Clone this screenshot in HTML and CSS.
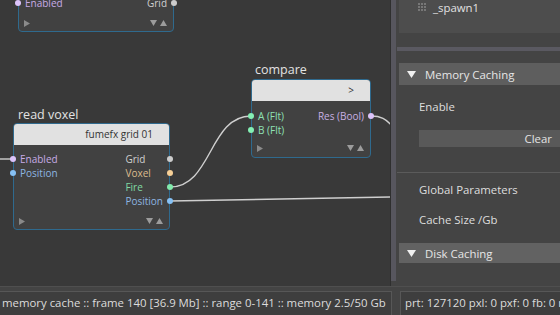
FILE: index.html
```html
<!DOCTYPE html>
<html>
<head>
<meta charset="utf-8">
<link rel="stylesheet" href="styles.css">
</head>
<body>
<div class="app">
  <div class="main">
    <div class="graph">
      <svg class="wires" width="390" height="287" viewBox="0 0 390 287">
        <path d="M0,159 L13,159" />
        <path d="M170,187 C212,187 209,116 251,116" />
        <path d="M170,201 C260,200 330,198 392,197" />
        <path d="M371,116 C381,116 386,119 392,126" />
      </svg>

      <div class="node node-top">
        <div class="box">
          <div class="ports">
            <div class="col in">
              <div class="port enabled"><span class="dot"></span>Enabled</div>
            </div>
            <div class="col out">
              <div class="port grid"><span class="dot"></span>Grid</div>
            </div>
          </div>
          <div class="foot">
            <svg class="play" width="6" height="7" viewBox="0 0 6 7"><polygon points="0,0 6,3.5 0,7"/></svg>
            <span class="arrows">
              <svg width="7" height="6" viewBox="0 0 7 6"><polygon points="0,0 7,0 3.5,6"/></svg>
              <svg width="7" height="6" viewBox="0 0 7 6"><polygon points="3.5,0 7,6 0,6"/></svg>
            </span>
          </div>
        </div>
      </div>

      <div class="node node-read">
        <div class="title">read voxel</div>
        <div class="box">
          <div class="head">fumefx grid 01</div>
          <div class="ports">
            <div class="col in">
              <div class="port enabled"><span class="dot"></span>Enabled</div>
              <div class="port position"><span class="dot"></span>Position</div>
            </div>
            <div class="col out">
              <div class="port grid"><span class="dot"></span>Grid</div>
              <div class="port voxel"><span class="dot"></span>Voxel</div>
              <div class="port fire"><span class="dot"></span>Fire</div>
              <div class="port position"><span class="dot"></span>Position</div>
            </div>
          </div>
          <div class="foot">
            <svg class="play" width="6" height="7" viewBox="0 0 6 7"><polygon points="0,0 6,3.5 0,7"/></svg>
            <span class="arrows">
              <svg width="7" height="6" viewBox="0 0 7 6"><polygon points="0,0 7,0 3.5,6"/></svg>
              <svg width="7" height="6" viewBox="0 0 7 6"><polygon points="3.5,0 7,6 0,6"/></svg>
            </span>
          </div>
        </div>
      </div>

      <div class="node node-compare">
        <div class="title">compare</div>
        <div class="box">
          <div class="head">&gt;</div>
          <div class="ports">
            <div class="col in">
              <div class="port flt"><span class="dot"></span>A (Flt)</div>
              <div class="port flt"><span class="dot"></span>B (Flt)</div>
            </div>
            <div class="col out">
              <div class="port res"><span class="dot"></span>Res (Bool)</div>
            </div>
          </div>
          <div class="foot">
            <svg class="play" width="6" height="7" viewBox="0 0 6 7"><polygon points="0,0 6,3.5 0,7"/></svg>
            <span class="arrows">
              <svg width="7" height="6" viewBox="0 0 7 6"><polygon points="0,0 7,0 3.5,6"/></svg>
              <svg width="7" height="6" viewBox="0 0 7 6"><polygon points="3.5,0 7,6 0,6"/></svg>
            </span>
          </div>
        </div>
      </div>
    </div>
    <div class="splitter"></div>
    <div class="panel">
      <div class="tree">
        <div class="tree-item">
          <svg class="grip" width="8" height="8" viewBox="0 0 8 8">
            <rect x="0" y="0" width="2" height="2"/><rect x="3" y="0" width="2" height="2"/><rect x="6" y="0" width="2" height="2"/>
            <rect x="0" y="3" width="2" height="2"/><rect x="3" y="3" width="2" height="2"/><rect x="6" y="3" width="2" height="2"/>
            <rect x="0" y="6" width="2" height="2"/><rect x="3" y="6" width="2" height="2"/><rect x="6" y="6" width="2" height="2"/>
          </svg>
          <span>_spawn1</span>
        </div>
      </div>
      <div class="hbar"></div>
      <div class="section-head">
        <svg width="9" height="7" viewBox="0 0 9 7"><polygon points="0,0 9,0 4.5,7"/></svg>
        <span>Memory Caching</span>
      </div>
      <div class="prop first">Enable</div>
      <div class="button">Clear</div>
      <div class="sep"></div>
      <div class="prop">Global Parameters</div>
      <div class="prop">Cache Size /Gb</div>
      <div class="section-head disk">
        <svg width="9" height="7" viewBox="0 0 9 7"><polygon points="0,0 9,0 4.5,7"/></svg>
        <span>Disk Caching</span>
      </div>
    </div>
  </div>
  <div class="status">
    <div class="sbox sleft">memory cache :: frame 140 [36.9 Mb] :: range 0-141 :: memory 2.5/50 Gb</div>
    <div class="sbox sright">prt: 127120 pxl: 0 pxf: 0 fb: 0 mem: 0</div>
  </div>
</div>
</body>
</html>
```

FILE: styles.css
```css
html, body {
  margin: 0;
  padding: 0;
}
body {
  width: 560px;
  height: 315px;
  overflow: hidden;
  background: #444444;
  font-family: "Open Sans", "Noto Sans", sans-serif;
  color: #dcdcdc;
}
.app {
  display: flex;
  flex-direction: column;
  height: 315px;
}
.main {
  display: flex;
  height: 287px;
}
.graph {
  position: relative;
  width: 390px;
  height: 286px;
  background: #393939;
  border-right: 1px solid #2f2f2f;
  overflow: hidden;
  flex: none;
}
.wires {
  position: absolute;
  left: 0;
  top: 0;
}
.wires path {
  fill: none;
  stroke: #cfcfcf;
  stroke-width: 1.4;
}
.splitter {
  width: 5px;
  height: 281px;
  background: #57565e;
  flex: none;
}
.node {
  position: absolute;
}
.node-top {
  left: 18px;
  top: -12px;
  width: 156px;
}
.node-read {
  left: 13px;
  top: 107px;
  width: 157px;
}
.node-compare {
  left: 251px;
  top: 62px;
  width: 120px;
}
.title {
  font-size: 12.5px;
  line-height: 16px;
  color: #e2e2e2;
  padding-left: 5px;
  margin-bottom: 0;
}
.node-compare .title {
  padding-left: 4px;
  margin-bottom: 1px;
}
.box {
  background: #414141;
  border: 1px solid #2f6a8e;
  border-radius: 4px;
}
.head {
  background: #e1e1e1;
  color: #333;
  font-size: 10px;
  height: 21px;
  line-height: 21px;
  text-align: right;
  padding-right: 16px;
  border-radius: 3px 3px 0 0;
}
.ports {
  display: flex;
  justify-content: space-between;
  padding-top: 7px;
}
.node-compare .ports {
  padding-top: 8px;
}
.col {
  display: flex;
  flex-direction: column;
  align-items: stretch;
}
.port {
  position: relative;
  font-size: 10px;
  line-height: 14px;
  height: 14px;
  white-space: nowrap;
}
.in .port {
  padding-left: 6px;
}
.out .port {
  padding-right: 6px;
}
.dot {
  position: absolute;
  top: 4px;
  width: 6px;
  height: 6px;
  border-radius: 50%;
}
.in .dot {
  left: -4px;
}
.out .dot {
  right: -4px;
}
.enabled { color: #c7abe6; }
.enabled .dot { background: #dcc3fa; }
.position { color: #8db6e2; }
.position .dot { background: #86c1f4; }
.grid { color: #d0d0d0; }
.grid .dot { background: #cccccc; }
.voxel { color: #dcbd8e; }
.voxel .dot { background: #f6cf96; }
.fire { color: #80d9a3; }
.fire .dot { background: #82eaac; }
.flt { color: #8ee0b4; }
.flt .dot { background: #84f0b4; }
.res { color: #c8b0e2; }
.res .dot { background: #dcc3fa; }
.foot {
  display: flex;
  justify-content: space-between;
  align-items: flex-end;
  height: 21px;
  box-sizing: border-box;
  padding: 0 6px 5px 5px;
}
.foot .play {
  margin-bottom: -0.5px;
}
.foot svg polygon {
  fill: #8a8a8a;
}
.foot .arrows {
  display: flex;
  gap: 3px;
}
.foot .arrows polygon {
  fill: #9c9c9c;
}
.node-compare .foot {
  height: 20px;
  padding-bottom: 6px;
}

/* panel */
.panel {
  flex: 1;
  display: flex;
  flex-direction: column;
  padding-left: 1px;
  font-size: 11.4px;
  color: #dedede;
}
.tree {
  height: 33px;
  margin-left: 2px;
  background: #4d4d4d;
}
.tree-item {
  display: flex;
  align-items: center;
  height: 14px;
  padding-left: 19px;
  gap: 7px;
  color: #e0e0e0;
}
.grip rect {
  fill: #777;
}
.hbar {
  margin-top: 14px;
  height: 4px;
  background: #5a5961;
}
.section-head {
  margin-top: 12px;
  margin-left: 2px;
  height: 22px;
  background: #5e5e5e;
  display: flex;
  align-items: center;
  gap: 9px;
  padding-left: 8px;
  color: #e6e6e6;
}
.section-head polygon {
  fill: #f0f0f0;
}
.section-head.disk {
  margin-top: 8px;
  height: 20px;
  background: #626262;
}
.prop {
  padding-left: 22px;
  height: 30px;
  line-height: 30px;
}
.prop.first {
  margin-top: 7px;
}
.button {
  margin-left: 22px;
  height: 17px;
  line-height: 17px;
  background: #595959;
  text-align: right;
  padding-right: 8px;
  color: #e4e4e4;
  margin-top: 8px;
}
.sep {
  margin-top: 25px;
  height: 1px;
  background: #5b5b5b;
}
.sep + .prop {
  margin-top: 2px;
}

/* status */
.status {
  display: flex;
  justify-content: space-between;
  border-top: 1px solid #4f4f4f;
  padding-top: 4px;
  flex: 1;
}
.sbox {
  border: 1px solid #575757;
  background: #3e3e3e;
  height: 26px;
  line-height: 22px;
  font-size: 11.4px;
  color: #dcdcdc;
  white-space: nowrap;
  overflow: hidden;
  box-sizing: border-box;
}
.sleft {
  width: 392px;
  padding-left: 2px;
  border-left: none;
}
.sright {
  width: 164px;
  margin-right: -4px;
  padding-left: 4px;
}
```
